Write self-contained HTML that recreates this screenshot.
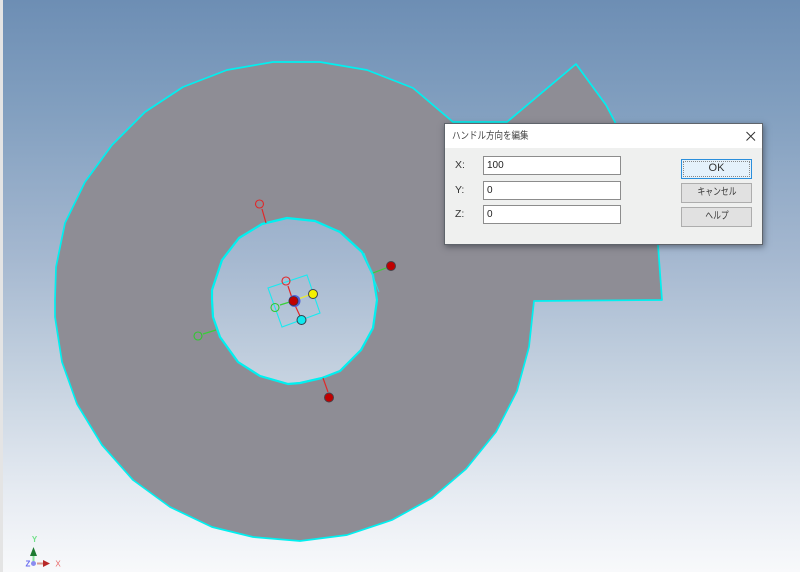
<!DOCTYPE html>
<html lang="ja">
<head>
<meta charset="utf-8">
<style>
html,body{margin:0;padding:0;width:800px;height:572px;overflow:hidden;background:#fff}
#bg{position:absolute;left:0;top:0;width:800px;height:572px;background:linear-gradient(to bottom,#6d8eb4 0%,#83a0c0 20%,#a5b8d0 45%,#c5d2e0 66%,#e6ebf2 86%,#f8f9fb 100%)}
#strip{position:absolute;left:0;top:0;width:3px;height:572px;background:#e4e4e4}
svg{position:absolute;left:0;top:0}
#dlg{position:absolute;left:444px;top:123px;width:317px;height:120px;background:#eff0ef;border:1px solid #5f646b;box-shadow:1px 2px 6px rgba(40,45,55,.55);font-family:"Liberation Sans","Noto Sans CJK JP",sans-serif;font-size:11px;color:#222}
#tb{position:absolute;left:0;top:0;width:317px;height:24px;background:#fff}
#tt{position:absolute;left:7px;top:4px;line-height:17px;font-size:10px;color:#444;white-space:nowrap;transform:scaleX(.85);transform-origin:0 50%}
.lb{position:absolute;left:10px;line-height:14px;font-size:10.5px;color:#333}
.in{position:absolute;left:38px;box-sizing:border-box;width:138px;height:19px;background:#fff;border:1.5px solid #8c8c8c;line-height:17px;padding-left:3px;font-size:10px;color:#222}
.bt{position:absolute;left:236px;box-sizing:border-box;width:71px;height:20px;background:#e1e1e1;border:1px solid #adadad;text-align:center;line-height:17px;font-size:10px;color:#333}
.bt span{display:inline-block;transform:scaleX(.78);white-space:nowrap}
#ok{background:#e5f1fb;border:1px solid #2b8fdc;font-size:11px;outline:1px dotted #888;outline-offset:-3px}
</style>
</head>
<body>
<div id="bg"></div>
<div id="strip"></div>
<svg width="800" height="572" viewBox="0 0 800 572">
<path fill="#8e8d95" fill-rule="evenodd" stroke="#00f0f0" stroke-width="1.7" stroke-linejoin="round" d="M55 300L56 267L65 223L85 182L112 145L145 112L183 87L227 70L273 62L320 62L367 70L413 88L453 122L507 122L576 64L606 105L615 122L658 245L662 300L534 301L529 347L517 391L496 432L466 469L432 498L392 520L347 535L300 541L253 537L212 527L170 507L133 480L102 445L77 404L62 362L55 317Z
M212 300L212 290L222 260L239 238L262 224L287 218L315 221L340 232L362 252L373 275L377 300L373 328L361 350L340 371L322 378L300 383L288 384L260 376L238 362L220 337L213 317Z"/>
<path fill="none" stroke="#00f0f0" stroke-width="2.2" stroke-linejoin="round" d="M212 300L212 290L222 260L239 238L262 224L287 218L315 221L340 232L362 252L373 275L377 300L373 328L361 350L340 371L322 378L300 383L288 384L260 376L238 362L220 337L213 317Z"/>
<path fill="none" stroke="#2be0e6" stroke-width="1" d="M364 253L379 292"/>
<path fill="none" stroke="#18eaf0" stroke-width="1.1" d="M307 275L320 313L282 327L268 288Z"/>
<path fill="none" stroke="#e02828" stroke-width="1.2" d="M262 209L266 223M323 378L328 392M288 286L293 301L300 316"/>
<path fill="none" stroke="#38d038" stroke-width="1.2" d="M373 273L386 268M203 334L216 330M280 305L293 301"/>
<path fill="none" stroke="#f0f020" stroke-width="1.2" d="M293 301L309 295"/>
<circle cx="259.500" cy="204" r="4" fill="none" stroke="#e02828" stroke-width="1.100"/>
<circle cx="286" cy="281" r="4" fill="none" stroke="#e02828" stroke-width="1.100"/>
<circle cx="198" cy="336" r="4" fill="none" stroke="#30c830" stroke-width="1.100"/>
<circle cx="275" cy="307.500" r="4" fill="none" stroke="#30c830" stroke-width="1.100"/>
<circle cx="391" cy="266" r="4.500" fill="#c00000" stroke="#4a4048" stroke-width="1"/>
<circle cx="329" cy="397.500" r="4.500" fill="#c00000" stroke="#4a4048" stroke-width="1"/>
<circle cx="294.500" cy="301" r="6" fill="#5060d8"/>
<circle cx="293.500" cy="301" r="4.500" fill="#c00000" stroke="#40303a" stroke-width=".8"/>
<circle cx="313" cy="294" r="4.500" fill="#f4f000" stroke="#40444c" stroke-width="1"/>
<circle cx="301.500" cy="320" r="4.500" fill="#10e8ee" stroke="#30404c" stroke-width="1"/>
<path fill="none" stroke="#8ce8a0" stroke-width="2" d="M33.500 561V554"/>
<path fill="#1e7a32" d="M33.500 547L37 556H30Z"/>
<path fill="none" stroke="#d89a90" stroke-width="2" d="M37 563.500H44"/>
<path fill="#b82828" d="M50 563.500L43 560V567Z"/>
<circle cx="33.500" cy="563.500" r="2.500" fill="#8a8cf0"/>
<text x="34.500" y="542" text-anchor="middle" font-family="Liberation Sans,sans-serif" font-size="8" font-weight="bold" fill="#70e088">Y</text>
<text x="28" y="566.500" text-anchor="middle" font-family="Liberation Sans,sans-serif" font-size="8" font-weight="bold" fill="#6a6cf0">Z</text>
<text x="58" y="566.500" text-anchor="middle" font-family="Liberation Sans,sans-serif" font-size="8" fill="#e86868">X</text>
</svg>
<div id="dlg">
  <div id="tb"><div id="tt">ハンドル方向を編集</div>
    <svg width="317" height="24" viewBox="0 0 317 24"><path d="M301.500 8L310 16.500M310 8L301.500 16.500" stroke="#333" stroke-width="1" fill="none"/></svg>
  </div>
  <div class="lb" style="top:34px">X:</div>
  <div class="lb" style="top:59px">Y:</div>
  <div class="lb" style="top:83px">Z:</div>
  <div class="in" style="top:32px">100</div>
  <div class="in" style="top:57px">0</div>
  <div class="in" style="top:81px">0</div>
  <div class="bt" id="ok" style="top:35px">OK</div>
  <div class="bt" style="top:59px"><span>キャンセル</span></div>
  <div class="bt" style="top:83px"><span>ヘルプ</span></div>
</div>
</body>
</html>
